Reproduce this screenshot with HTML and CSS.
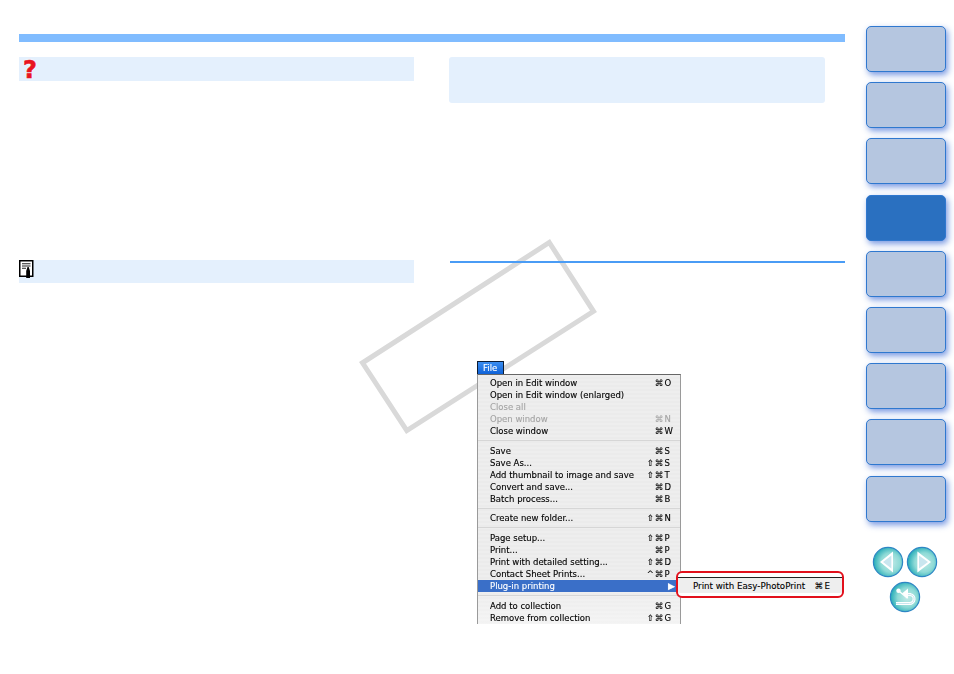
FILE: index.html
```html
<!DOCTYPE html>
<html lang="en">
<head>
<meta charset="utf-8">
<title>Plug-in printing</title>
<link rel="stylesheet" href="styles.css">
</head>
<body>
<svg class="watermark" width="954" height="674" viewBox="0 0 954 674" aria-hidden="true">
  <polygon points="549.3,242.5 593.5,311.3 406.8,430.5 362.5,362.8" fill="none" stroke="#d9d9d9" stroke-width="5"/>
</svg>
<div class="page">
  <main class="content">
    <div class="topbar"></div>
    <div class="columns">
      <section class="col-left">
        <div class="callout">
          <span class="question">?</span>
        </div>
        <div class="callout note">
          <svg class="note-icon" width="15" height="18" viewBox="0 0 15 18" aria-hidden="true">
            <rect x="0.75" y="0.75" width="13" height="15.5" fill="#fff" stroke="#000" stroke-width="1.5"/>
            <path d="M3 3.800h8.500M3 6h8.500M3 8.200h4" stroke="#222" stroke-width="1.1" fill="none"/>
            <path d="M7.200 11l1.300-4h1.200l1.300 4v7H7.200z" fill="#000"/>
          </svg>
        </div>
      </section>
      <section class="col-right">
        <div class="infobox"></div>
        <div class="rule"></div>
        <div class="menu-wrap">
          <div class="menu-title">File</div>
          <div class="menu">
            <div class="row"><span>Open in Edit window</span><span class="keys">⌘<b>O</b></span></div>
            <div class="row"><span>Open in Edit window (enlarged)</span></div>
            <div class="row off"><span>Close all</span></div>
            <div class="row off"><span>Open window</span><span class="keys">⌘<b>N</b></span></div>
            <div class="row"><span>Close window</span><span class="keys">⌘<b>W</b></span></div>
            <div class="sep"></div>
            <div class="row"><span>Save</span><span class="keys">⌘<b>S</b></span></div>
            <div class="row"><span>Save As...</span><span class="keys">⇧⌘<b>S</b></span></div>
            <div class="row"><span>Add thumbnail to image and save</span><span class="keys">⇧⌘<b>T</b></span></div>
            <div class="row"><span>Convert and save...</span><span class="keys">⌘<b>D</b></span></div>
            <div class="row"><span>Batch process...</span><span class="keys">⌘<b>B</b></span></div>
            <div class="sep tight"></div>
            <div class="row"><span>Create new folder...</span><span class="keys">⇧⌘<b>N</b></span></div>
            <div class="sep"></div>
            <div class="row"><span>Page setup...</span><span class="keys">⇧⌘<b>P</b></span></div>
            <div class="row"><span>Print...</span><span class="keys">⌘<b>P</b></span></div>
            <div class="row"><span>Print with detailed setting...</span><span class="keys">⇧⌘<b>D</b></span></div>
            <div class="row"><span>Contact Sheet Prints...</span><span class="keys">^⌘<b>P</b></span></div>
            <div class="row active"><span>Plug-in printing</span><span class="arrow">▶</span></div>
            <div class="sep"></div>
            <div class="row"><span>Add to collection</span><span class="keys">⌘<b>G</b></span></div>
            <div class="row"><span>Remove from collection</span><span class="keys">⇧⌘<b>G</b></span></div>
          </div>
          <div class="submenu">
            <div class="subrow"><span>Print with Easy-PhotoPrint</span><span class="keys">⌘<b>E</b></span></div>
          </div>
        </div>
      </section>
    </div>
  </main>
  <nav class="sidebar">
    <div class="tab"></div>
    <div class="tab"></div>
    <div class="tab"></div>
    <div class="tab current"></div>
    <div class="tab"></div>
    <div class="tab"></div>
    <div class="tab"></div>
    <div class="tab"></div>
    <div class="tab"></div>
    <div class="nav-buttons">
      <svg class="round" width="32" height="32" viewBox="0 0 32 32" aria-hidden="true">
        <defs>
          <radialGradient id="teal" cx="58%" cy="52%" r="55%">
            <stop offset="0" stop-color="#c4ebe8"/>
            <stop offset="0.6" stop-color="#8edad6"/>
            <stop offset="1" stop-color="#2fb0ba"/>
          </radialGradient>
        </defs>
        <circle cx="16" cy="16" r="14.600" fill="url(#teal)" stroke="#2d86c4" stroke-width="1.200"/>
        <path d="M21 5.500v21L8 16z" fill="#fff"/>
        <path d="M19.400 9.500v13L11 16z" fill="#c9e6ef"/>
      </svg>
      <svg class="round" width="32" height="32" viewBox="0 0 32 32" aria-hidden="true">
        <circle cx="16" cy="16" r="14.600" fill="url(#teal)" stroke="#2d86c4" stroke-width="1.200"/>
        <path d="M11.400 5.500v21L25 16z" fill="#fff"/>
        <path d="M13 9.500v13L22 16z" fill="#c9e6ef"/>
      </svg>
      <svg class="round" width="32" height="32" viewBox="0 0 32 32" aria-hidden="true">
        <circle cx="16" cy="16" r="14.600" fill="url(#teal)" stroke="#2d86c4" stroke-width="1.200"/>
        <path d="M7 22.500h13.500a4.500 4.500 0 0 0 1-8.900H18" fill="none" stroke="#fff" stroke-width="3"/>
        <path d="M7 22.500h13.500a4.500 4.500 0 0 0 1-8.900H18" fill="none" stroke="#c9e6ef" stroke-width="1"/>
        <path d="M13 12.500l6-5v10z" fill="#fff"/>
        <path d="M9.500 9.800l9 7.500" stroke="#fff" stroke-width="1.300" fill="none"/>
        <circle cx="9.500" cy="9.800" r="2.200" fill="#fff"/>
      </svg>
    </div>
  </nav>
</div>
</body>
</html>
```
FILE: styles.css
```css
* {
  box-sizing: border-box;
}

html,
body {
  margin: 0;
  padding: 0;
  background: #fff;
}

body {
  position: relative;
  width: 954px;
  height: 674px;
  overflow: hidden;
  font-family: "DejaVu Sans", sans-serif;
}

.watermark {
  position: absolute;
  left: 0;
  top: 0;
}

.page {
  position: relative;
  display: flex;
  align-items: flex-start;
  padding: 26px 0 0 19px;
}

.content {
  width: 826px;
  margin-top: 8px;
}

.topbar {
  height: 8px;
  background: #80bcff;
}

.columns {
  display: flex;
  margin-top: 15px;
}

.col-left {
  width: 395px;
}

.callout {
  height: 24px;
  background: #e4f0fd;
}

.callout.note {
  position: relative;
  margin-top: 179px;
  height: 23px;
}

.question {
  position: absolute;
  margin: 1px 0 0 4px;
  font-family: "DejaVu Sans", sans-serif;
  font-weight: 700;
  font-size: 24px;
  line-height: 24px;
  color: #e8141f;
  -webkit-text-stroke: 0.6px #e8141f;
  text-shadow: 0 0 2px #fff, 0 0 2px #fff;
}

.note-icon {
  display: block;
}

.col-right {
  width: 396px;
  margin-left: 35px;
}

.infobox {
  width: 376px;
  height: 46px;
  background: #e4f0fd;
  border-radius: 3px;
}

.rule {
  height: 2px;
  margin: 158px 0 0 1px;
  background: #4a9cf5;
}

.menu-wrap {
  position: relative;
  width: 204px;
  margin: 98px 0 0 28px;
  color: #000;
  font-size: 8.500px;
  line-height: 12px;
  -webkit-text-stroke: 0.12px currentColor;
  filter: blur(0.25px);
}

.menu-title {
  width: 27px;
  height: 13px;
  padding-left: 5px;
  background: linear-gradient(#3a8df0, #0f62d8);
  border: solid #0c1c33;
  border-width: 1px 1px 0 1px;
  color: #fff;
  line-height: 12px;
}

.menu {
  height: 250px;
  padding-top: 2px;
  overflow: hidden;
  border-top: 1px solid #666;
  border-left: 1px solid #9a9a9a;
  border-right: 1px solid #9a9a9a;
  background:
    linear-gradient(to top, rgba(255, 255, 255, 0.4), transparent 40px),
    repeating-linear-gradient(#eeeeee 0 2px, #ebebeb 2px 4px);
}

.row {
  display: flex;
  justify-content: space-between;
  height: 12px;
  padding: 0 7px 0 12px;
  white-space: nowrap;
}

.row.off {
  color: #a4a4a4;
}

.row.active {
  background: #3a6fc8;
  color: #fff;
  padding-right: 5px;
}

.arrow {
  font-size: 9px;
}

.sep {
  height: 8px;
  background: linear-gradient(transparent 3px, #d6d6d6 3px, #d6d6d6 4px, transparent 4px);
}

.sep.tight {
  height: 7px;
}

.keys {
  display: inline-flex;
  justify-content: flex-end;
  letter-spacing: 0.8px;
}

.keys b {
  width: 9px;
  padding-left: 0.500px;
  font-weight: 400;
  letter-spacing: 0;
}

.submenu {
  position: absolute;
  left: 199px;
  top: 210px;
  width: 168px;
  height: 27px;
  padding-top: 3.500px;
  background: #fff;
  border: 2.500px solid #e2101c;
  border-radius: 6px;
  font-size: 8.700px;
}

.subrow {
  display: flex;
  justify-content: space-between;
  height: 16.500px;
  padding: 2px 9px 0 15px;
  border-top: 1px solid #222;
  background: #eeeeee;
  white-space: nowrap;
}

.sidebar {
  width: 80px;
  margin-left: 21px;
  display: flex;
  flex-direction: column;
  gap: 10.200px;
}

.tab {
  height: 46px;
  background: #b5c6e0;
  border: 1px solid #2f78cf;
  border-radius: 5px;
  box-shadow: 2px 3px 6px rgba(50, 100, 210, 0.65);
}

.tab.current {
  background: #2a70c0;
}

.nav-buttons {
  display: flex;
  flex-wrap: wrap;
  justify-content: flex-start;
  gap: 3px 2px;
  margin: 14px 0 0 6px;
}

.round {
  display: block;
}

.round:last-child {
  margin-left: 17px;
}
```
